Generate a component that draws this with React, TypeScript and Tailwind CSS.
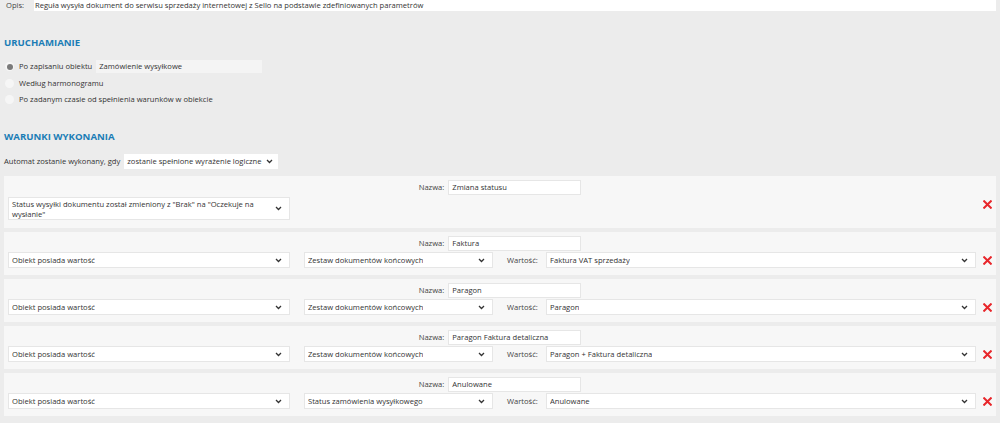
import React from 'react'

const Chevron = () => (
    <svg width="7" height="5" viewBox="0 0 7 5" className="shrink-0">
        <path d="M1 1 L3.5 3.5 L6 1" fill="none" stroke="#333" strokeWidth="1.3" />
    </svg>
)

const RemoveIcon = () => (
    <svg width="9" height="9" viewBox="0 0 9 9" className="shrink-0">
        <path d="M1.2 1.2 L7.8 7.8 M7.8 1.2 L1.2 7.8" stroke="#e8262b" strokeWidth="2" strokeLinecap="square" />
    </svg>
)

const Select = ({ text, className }: { text: string; className: string }) => (
    <div className={`flex items-center justify-between bg-white border border-[#e6e6e6] pl-[3px] pr-[7px] ${className}`}>
        <span className="truncate">{text}</span>
        <Chevron />
    </div>
)

const Radio = ({ checked, label }: { checked?: boolean; label: string }) => (
    <div className="flex items-center gap-[5px]">
        <span className="w-[9px] h-[9px] rounded-full bg-[#f6f6f6] flex items-center justify-center">
            {checked && <span className="w-[6px] h-[6px] rounded-full bg-[#7a7a7a]" />}
        </span>
        <span>{label}</span>
    </div>
)

const Nazwa = ({ value }: { value: string }) => (
    <div className="flex items-center justify-center gap-[4px] text-[#444]">
        <span>Nazwa:</span>
        <div className="w-[133px] h-[15px] bg-white border border-[#e6e6e6] px-[3px] flex items-center text-[#333]">{value}</div>
    </div>
)

const conditions = [
    { name: 'Faktura', field: 'Zestaw dokumentów końcowych', value: 'Faktura VAT sprzedaży' },
    { name: 'Paragon', field: 'Zestaw dokumentów końcowych', value: 'Paragon' },
    { name: 'Paragon Faktura detaliczna', field: 'Zestaw dokumentów końcowych', value: 'Paragon + Faktura detaliczna' },
    { name: 'Anulowane', field: 'Status zamówienia wysyłkowego', value: 'Anulowane' },
]

const App = () => {
    return (
        <div className="min-h-screen bg-[#ececec] text-[#333] text-[7.6px] leading-[11px]" style={{ fontFamily: '"Open Sans", "Noto Sans", sans-serif' }}>
            <div className="flex items-center h-[11px] pr-[4px]">
                <span className="w-[34px] pl-[6px] text-[#444]">Opis:</span>
                <div className="flex-1 h-[11px] bg-white px-[1px] flex items-center">Reguła wysyła dokument do serwisu sprzedaży internetowej z Sello na podstawie zdefiniowanych parametrów</div>
            </div>

            <h2 className="mt-[26px] pl-[4px] text-[9.6px] leading-[12px] font-bold text-[#1b7db6]">URUCHAMIANIE</h2>

            <div className="mt-[11px] pl-[5px] flex flex-col">
                <div className="flex items-center h-[13px] gap-[4px]">
                    <Radio checked label="Po zapisaniu obiektu" />
                    <div className="w-[166px] h-[13px] bg-[#f4f4f4] px-[3px] flex items-center">Zamówienie wysyłkowe</div>
                </div>
                <div className="mt-[4px] h-[13px] flex items-center"><Radio label="Według harmonogramu" /></div>
                <div className="mt-[3px] h-[13px] flex items-center"><Radio label="Po zadanym czasie od spełnienia warunków w obiekcie" /></div>
            </div>

            <h2 className="mt-[25px] pl-[4px] text-[9.6px] leading-[12px] font-bold text-[#1b7db6]">WARUNKI WYKONANIA</h2>

            <div className="mt-[11px] pl-[4px] flex items-center gap-[4px]">
                <span>Automat zostanie wykonany, gdy</span>
                <div className="h-[15px] bg-white pl-[3px] pr-[5px] flex items-center gap-[4px]">
                    <span>zostanie spełnione wyrażenie logiczne</span>
                    <Chevron />
                </div>
            </div>

            <div className="mt-[7px] px-[4px] flex flex-col gap-[4px]">
                <div className="bg-[#f7f7f7] h-[52px] px-[4px] pt-[4px] flex flex-col">
                    <Nazwa value="Zmiana statusu" />
                    <div className="flex items-start justify-between mt-[2px]">
                        <div className="w-[282px] h-[23px] bg-white border border-[#e6e6e6] pl-[3px] pr-[7px] flex items-center justify-between">
                            <span className="leading-[10px]">Status wysyłki dokumentu został zmieniony z "Brak" na "Oczekuje na wysłanie"</span>
                            <Chevron />
                        </div>
                        <div className="mt-[3px]"><RemoveIcon /></div>
                    </div>
                </div>

                {conditions.map((c) => (
                    <div key={c.name} className="bg-[#f7f7f7] h-[43px] px-[4px] pt-[4px] flex flex-col">
                        <Nazwa value={c.name} />
                        <div className="flex items-center mt-[1px]">
                            <Select text="Obiekt posiada wartość" className="w-[282px] h-[16px]" />
                            <Select text={c.field} className="ml-[14px] w-[189px] h-[16px]" />
                            <span className="ml-[14px] w-[39px] text-[#444]">Wartość:</span>
                            <Select text={c.value} className="flex-1 h-[16px]" />
                            <div className="ml-[7px]"><RemoveIcon /></div>
                        </div>
                    </div>
                ))}
            </div>
        </div>
    )
}

export default App
